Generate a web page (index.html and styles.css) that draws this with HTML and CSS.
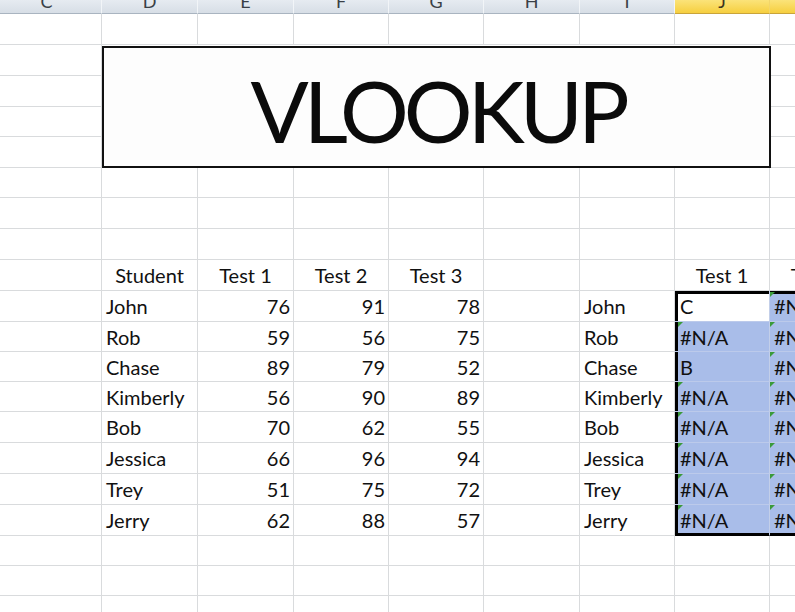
FILE: index.html
```html
<!DOCTYPE html>
<html>
<head>
<meta charset="utf-8">
<title>VLOOKUP</title>
<link rel="stylesheet" href="styles.css">
</head>
<body>
<div class="sheet">
  <div class="colhead">
    <div class="ch first">C</div>
    <div class="ch">D</div>
    <div class="ch">E</div>
    <div class="ch">F</div>
    <div class="ch">G</div>
    <div class="ch">H</div>
    <div class="ch">I</div>
    <div class="ch hl">J</div>
    <div class="ch hl">K</div>
  </div>
  <div class="grid">
    <!-- row 1 -->
    <div class="c"></div><div class="c"></div><div class="c"></div><div class="c"></div><div class="c"></div><div class="c"></div><div class="c"></div><div class="c"></div><div class="c"></div>
    <!-- title shape spanning D:J, rows 2-5 -->
    <div class="title-box"><span class="title">VLOOKUP</span></div>
    <!-- rows 2-5: only C and K visible -->
    <div class="c"></div><div class="c"></div>
    <div class="c"></div><div class="c"></div>
    <div class="c"></div><div class="c"></div>
    <div class="c"></div><div class="c"></div>
    <!-- rows 6-8 -->
    <div class="c"></div><div class="c"></div><div class="c"></div><div class="c"></div><div class="c"></div><div class="c"></div><div class="c"></div><div class="c"></div><div class="c"></div>
    <div class="c"></div><div class="c"></div><div class="c"></div><div class="c"></div><div class="c"></div><div class="c"></div><div class="c"></div><div class="c"></div><div class="c"></div>
    <div class="c"></div><div class="c"></div><div class="c"></div><div class="c"></div><div class="c"></div><div class="c"></div><div class="c"></div><div class="c"></div><div class="c"></div>
    <!-- row 9: headings -->
    <div class="c"></div>
    <div class="c m">Student</div>
    <div class="c m">Test 1</div>
    <div class="c m">Test 2</div>
    <div class="c m">Test 3</div>
    <div class="c"></div>
    <div class="c"></div>
    <div class="c m">Test 1</div>
    <div class="c m">Test 2</div>
    <!-- John -->
    <div class="c"></div>
    <div class="c l">John</div><div class="c r">76</div><div class="c r">91</div><div class="c r">78</div>
    <div class="c"></div>
    <div class="c l">John</div>
    <div class="c l sel act lft top">C</div>
    <div class="c l sel top err">#N/A</div>
    <!-- Rob -->
    <div class="c"></div>
    <div class="c l">Rob</div><div class="c r">59</div><div class="c r">56</div><div class="c r">75</div>
    <div class="c"></div>
    <div class="c l">Rob</div>
    <div class="c l sel lft err">#N/A</div>
    <div class="c l sel err">#N/A</div>
    <!-- Chase -->
    <div class="c"></div>
    <div class="c l">Chase</div><div class="c r">89</div><div class="c r">79</div><div class="c r">52</div>
    <div class="c"></div>
    <div class="c l">Chase</div>
    <div class="c l sel lft">B</div>
    <div class="c l sel err">#N/A</div>
    <!-- Kimberly -->
    <div class="c"></div>
    <div class="c l">Kimberly</div><div class="c r">56</div><div class="c r">90</div><div class="c r">89</div>
    <div class="c"></div>
    <div class="c l">Kimberly</div>
    <div class="c l sel lft err">#N/A</div>
    <div class="c l sel err">#N/A</div>
    <!-- Bob -->
    <div class="c"></div>
    <div class="c l">Bob</div><div class="c r">70</div><div class="c r">62</div><div class="c r">55</div>
    <div class="c"></div>
    <div class="c l">Bob</div>
    <div class="c l sel lft err">#N/A</div>
    <div class="c l sel err">#N/A</div>
    <!-- Jessica -->
    <div class="c"></div>
    <div class="c l">Jessica</div><div class="c r">66</div><div class="c r">96</div><div class="c r">94</div>
    <div class="c"></div>
    <div class="c l">Jessica</div>
    <div class="c l sel lft err">#N/A</div>
    <div class="c l sel err">#N/A</div>
    <!-- Trey -->
    <div class="c"></div>
    <div class="c l">Trey</div><div class="c r">51</div><div class="c r">75</div><div class="c r">72</div>
    <div class="c"></div>
    <div class="c l">Trey</div>
    <div class="c l sel lft err">#N/A</div>
    <div class="c l sel err">#N/A</div>
    <!-- Jerry -->
    <div class="c"></div>
    <div class="c l">Jerry</div><div class="c r">62</div><div class="c r">88</div><div class="c r">57</div>
    <div class="c"></div>
    <div class="c l">Jerry</div>
    <div class="c l sel lft bot err">#N/A</div>
    <div class="c l sel bot err">#N/A</div>
    <!-- rows 18-20 -->
    <div class="c"></div><div class="c"></div><div class="c"></div><div class="c"></div><div class="c"></div><div class="c"></div><div class="c"></div><div class="c"></div><div class="c"></div>
    <div class="c"></div><div class="c"></div><div class="c"></div><div class="c"></div><div class="c"></div><div class="c"></div><div class="c"></div><div class="c"></div><div class="c"></div>
    <div class="c"></div><div class="c"></div><div class="c"></div><div class="c"></div><div class="c"></div><div class="c"></div><div class="c"></div><div class="c"></div><div class="c"></div>
  </div>
</div>
</body>
</html>
```
FILE: styles.css
```css
html, body {
  margin: 0;
  padding: 0;
  background: #ffffff;
  overflow: hidden;
}

.sheet {
  width: 865px;
  height: 612px;
  overflow: hidden;
  font-family: Lato, "Open Sans", sans-serif;
  color: #111;
}

.colhead,
.grid {
  display: grid;
  grid-template-columns: 102px 96px 96px 95px 95px 96px 95px 95px 95px;
}

.colhead {
  height: 14px;
}

.ch {
  box-sizing: border-box;
  height: 14px;
  overflow: hidden;
  display: flex;
  justify-content: center;
  align-items: flex-end;
  padding-bottom: 5px;
  font-size: 18px;
  line-height: 14px;
  color: #3a3f46;
  background: linear-gradient(#e6ebf1, #d7dee6);
  border-right: 1px solid #f2f5f8;
  border-bottom: 1px solid #a9b4c0;
}

.ch.first {
  padding-right: 8px;
}

.ch.hl {
  background: linear-gradient(#fbe37a, #f6cf3f);
  border-right-color: #f2d56a;
  border-bottom-color: #c9a43a;
  color: #3b3320;
}

.grid {
  grid-template-rows: 31px 31px 31px 30px 31px 30px 31px 31px 31px 31px 30px 30px 30px 31px 31px 31px 31px 30px 30px 30px;
}

.c {
  box-sizing: border-box;
  position: relative;
  border-right: 1px solid #d9dbdd;
  border-bottom: 1px solid #d9dbdd;
  display: flex;
  align-items: center;
  padding-top: 0;
  font-size: 20px;
  line-height: 20px;
  white-space: nowrap;
  overflow: visible;
}

.l { justify-content: flex-start; padding-left: 4px; }
.r { justify-content: flex-end; padding-right: 3px; }
.m { justify-content: center; }

.title-box {
  grid-column: 2 / 9;
  grid-row: 2 / 6;
  margin-top: 1px;
  margin-right: -1px;
  box-sizing: border-box;
  border: 2px solid #111;
  background: #fdfdfd;
  display: flex;
  align-items: center;
  justify-content: center;
  padding-top: 6px;
  padding-left: 2px;
  z-index: 1;
}

.title {
  font-size: 86px;
  line-height: 1.2;
  color: #0b0b0b;
  letter-spacing: -5px;
}

/* selection J:K */
.sel {
  background: #a9bde9;
  border-right-color: #c3cfe9;
  border-bottom-color: #bccaeb;
}

.sel.act {
  background: #ffffff;
}

.lft { box-shadow: inset 3px 0 0 #000; }
.top { box-shadow: inset 0 3px 0 #000; }
.bot { box-shadow: inset 0 -2px 0 #000; border-bottom-color: #000; }
.lft.top { box-shadow: inset 3px 0 0 #000, inset 0 3px 0 #000; }
.lft.bot { box-shadow: inset 3px 0 0 #000, inset 0 -2px 0 #000; }

.sel.lft { padding-left: 5px; }

.err::before {
  content: "";
  position: absolute;
  top: 0;
  left: 0;
  width: 0;
  height: 0;
  border-top: 5px solid #3a9a3a;
  border-right: 5px solid transparent;
}

.lft.err::before { left: 3px; }
.top.err::before { top: 1px; }
```
